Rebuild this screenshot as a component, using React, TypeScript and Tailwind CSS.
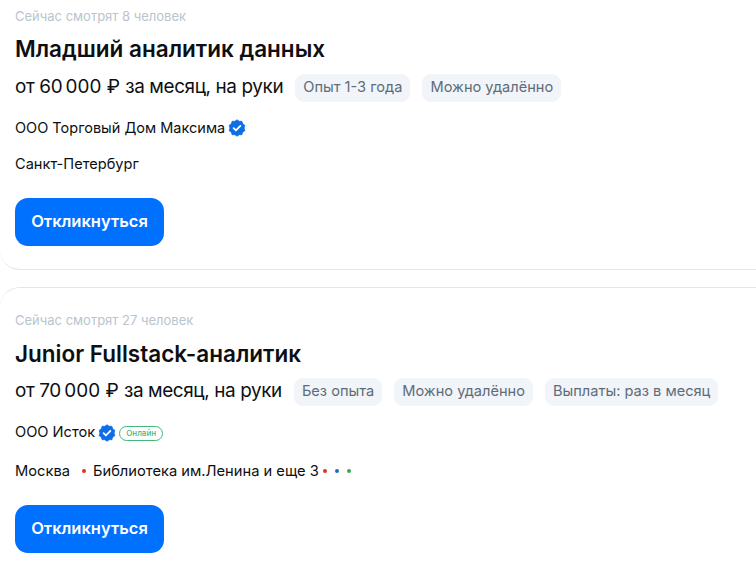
import React from "react";

function Verified() {
	return (
		<svg width="18" height="18" viewBox="0 0 24 24" className="shrink-0">
			<path
				fill="#0d6fe8"
				d="M12 1l2.900 2.100 3.600-.1 1.100 3.400 2.900 2.100L21.400 12l1.100 3.500-2.900 2.100-1.100 3.400-3.600-.1L12 23l-2.900-2.100-3.600.1-1.100-3.400-2.900-2.100L2.600 12 1.500 8.500l2.900-2.100 1.100-3.400 3.600.1z"
				stroke="#0d6fe8"
				strokeWidth="1"
				strokeLinejoin="round"
			/>
			<path d="M7.500 12.300l3.100 3 5.900-6" fill="none" stroke="#fff" strokeWidth="2.400" strokeLinecap="round" strokeLinejoin="round" />
		</svg>
	);
}

function Tag({ children }: { children: React.ReactNode }) {
	return <span className="flex h-[28px] items-center rounded-[9px] bg-[#f1f4f9] px-[8px] text-[14.600px] text-[#5e6c77]">{children}</span>;
}

function Salary({ amount }: { amount: string }) {
	return (
		<span className="text-[18.900px] leading-[28px] font-normal tracking-[-0.38px] text-[#0d0f12]">
			от {amount} ₽ за месяц, на руки
		</span>
	);
}

function Button() {
	return (
		<button className="flex h-[48px] w-[149px] items-center justify-center rounded-[13px] bg-[#0070ff] pb-[2px] text-[16.500px] font-semibold text-white">
			Откликнуться
		</button>
	);
}

function Dot({ color }: { color: string }) {
	return <span className={`h-[4px] w-[4px] rounded-full ${color}`} />;
}

export default function App() {
	return (
		<div className="h-[565px] w-[756px] overflow-hidden bg-white font-['Inter',sans-serif]">
			<div className="h-[270px] rounded-bl-[20px] border-b border-[#e3e5e8] pl-[15px]">
				<div className="pt-[7px] text-[13px] leading-[18px] text-[#b9c4cf]">Сейчас смотрят 8 человек</div>
				<h2 className="mt-[9px] text-[22.500px] leading-[30px] font-semibold text-[#0d0f12]">Младший аналитик данных</h2>
				<div className="mt-[7px] flex items-center gap-[12px]">
					<Salary amount={"60\u202f000"} />
					<div className="mt-[3px] flex gap-[12px]">
						<Tag>Опыт 1-3 года</Tag>
						<Tag>Можно удалённо</Tag>
					</div>
				</div>
				<div className="mt-[14px] flex h-[24px] items-center gap-[3px] text-[14.500px] text-[#0d0f12]">
					ООО Торговый Дом Максима
					<Verified />
				</div>
				<div className="mt-[12px] h-[24px] text-[14.600px] leading-[24px] text-[#0d0f12]">Санкт-Петербург</div>
				<div className="mt-[22px]">
					<Button />
				</div>
			</div>
			<div className="mt-[17px] h-[300px] rounded-tl-[20px] border-t border-[#e3e5e8] pl-[15px]">
				<div className="pt-[23px] text-[13px] leading-[18px] text-[#b9c4cf]">Сейчас смотрят 27 человек</div>
				<h2 className="mt-[10px] text-[22.500px] leading-[30px] font-semibold text-[#0d0f12]">Junior Fullstack-аналитик</h2>
				<div className="mt-[6px] flex items-center gap-[12px]">
					<Salary amount={"70\u202f000"} />
					<div className="mt-[3px] flex gap-[12px]">
						<Tag>Без опыта</Tag>
						<Tag>Можно удалённо</Tag>
						<Tag>Выплаты: раз в месяц</Tag>
					</div>
				</div>
				<div className="mt-[15px] flex h-[24px] items-center gap-[3px] text-[14.600px] text-[#0d0f12]">
					ООО Исток
					<Verified />
					<span className="flex h-[15px] w-[44px] items-center justify-center rounded-full border border-[#3fb87a] text-[8px] font-medium text-[#3fb87a]">
						Онлайн
					</span>
				</div>
				<div className="mt-[14px] flex h-[24px] items-center text-[14.700px] text-[#0d0f12]">
					Москва
					<span className="mr-[7px] ml-[12px]">
						<Dot color="block bg-[#e5302a]" />
					</span>
					Библиотека им.Ленина и еще 3
					<span className="ml-[4px] flex gap-[8px]">
						<Dot color="bg-[#e5302a]" />
						<Dot color="bg-[#1f6fb8]" />
						<Dot color="bg-[#3aa655]" />
					</span>
				</div>
				<div className="mt-[22px]">
					<Button />
				</div>
			</div>
		</div>
	);
}
